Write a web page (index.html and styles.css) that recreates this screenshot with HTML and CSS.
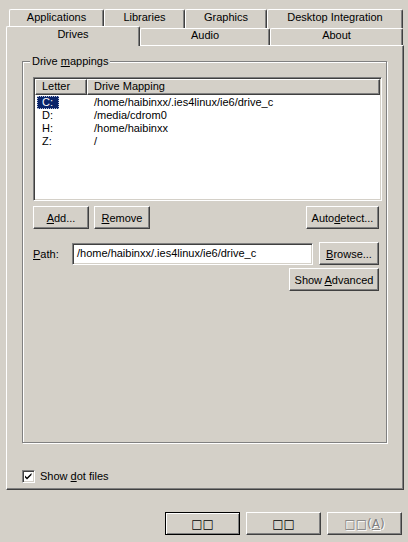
FILE: index.html
```html
<!DOCTYPE html>
<html>
<head>
<meta charset="utf-8">
<title>Wine configuration - Drives</title>
<link rel="stylesheet" href="styles.css">
</head>
<body>
<div class="dialog">
  <div class="tabrow back">
    <div class="tab w-app">Applications</div>
    <div class="tab w-lib">Libraries</div>
    <div class="tab w-gfx">Graphics</div>
    <div class="tab w-desk">Desktop Integration</div>
  </div>
  <div class="tabrow front">
    <div class="tab active w-drives">Drives</div>
    <div class="tab w-audio">Audio</div>
    <div class="tab w-about">About</div>
  </div>
  <div class="panel">
    <div class="group">
      <span class="group-title">Drive <u>m</u>appings</span>
      <div class="listview">
        <div class="lv-header">
          <div class="hdr col-letter">Letter</div>
          <div class="hdr col-map">Drive Mapping</div>
        </div>
        <div class="lv-row">
          <div class="cell col-letter"><span class="label selected">C:</span></div>
          <div class="cell col-map">/home/haibinxx/.ies4linux/ie6/drive_c</div>
        </div>
        <div class="lv-row">
          <div class="cell col-letter"><span class="label">D:</span></div>
          <div class="cell col-map">/media/cdrom0</div>
        </div>
        <div class="lv-row">
          <div class="cell col-letter"><span class="label">H:</span></div>
          <div class="cell col-map">/home/haibinxx</div>
        </div>
        <div class="lv-row">
          <div class="cell col-letter"><span class="label">Z:</span></div>
          <div class="cell col-map">/</div>
        </div>
      </div>
      <div class="row btnrow">
        <div class="btn b-add"><span><u>A</u>dd...</span></div>
        <div class="btn b-remove"><span><u>R</u>emove</span></div>
        <div class="btn b-auto"><span>Auto<u>d</u>etect...</span></div>
      </div>
      <div class="row pathrow">
        <span class="path-label"><u>P</u>ath:</span>
        <div class="input">/home/haibinxx/.ies4linux/ie6/drive_c</div>
        <div class="btn b-browse"><span><u>B</u>rowse...</span></div>
      </div>
      <div class="row advrow">
        <div class="btn b-adv"><span>Show <u>A</u>dvanced</span></div>
      </div>
    </div>
    <div class="check-row">
      <span class="checkbox"><svg width="9" height="9" viewBox="0 0 9 9"><path d="M1 3.5 L3 5.5 L7.5 1 L7.5 3 L3 7.5 L1 5.5 Z" fill="#000"/></svg></span>
      <span class="check-label">Show <u>d</u>ot files</span>
    </div>
  </div>
  <div class="footer">
    <div class="btn fbtn default"><span>□□</span></div>
    <div class="btn fbtn"><span>□□</span></div>
    <div class="btn fbtn disabled"><span>□□(<u>A</u>)</span></div>
  </div>
</div>
</body>
</html>
```
FILE: styles.css
```css
html, body {
  margin: 0;
  padding: 0;
}
body {
  width: 408px;
  height: 542px;
  background: #d4d0c8;
  font-family: "Liberation Sans", Arial, sans-serif;
  font-size: 11px;
  color: #000;
  overflow: hidden;
}
u {
  text-decoration: underline;
  text-underline-offset: 1px;
}
.dialog {
  padding: 9px 0 0 6px;
}

/* ---------- tabs ---------- */
.tabrow {
  display: flex;
}
.tabrow.back {
  margin-left: 3px;
  height: 19px;
}
.tabrow.front {
  margin-top: -2px;
  height: 19px;
  align-items: flex-start;
}
.tab {
  box-sizing: border-box;
  height: 19px;
  border-top: 1px solid #fff;
  border-left: 1px solid #fff;
  border-right: 1px solid #404040;
  border-radius: 2px 2px 0 0;
  box-shadow: inset -1px 0 #808080;
  background: #d4d0c8;
  text-align: center;
  line-height: 15px;
  white-space: nowrap;
}
.tabrow.front .tab {
  margin-top: 2px;
  height: 17px;
  line-height: 13px;
}
.tabrow.front .tab.active {
  position: relative;
  z-index: 1;
  margin-top: 0;
  height: 20px;
  line-height: 15px;
}
.w-app { width: 95px; }
.w-lib { width: 81px; }
.w-gfx { width: 82px; }
.w-desk { width: 136px; }
.w-drives { width: 134px; }
.w-audio { width: 130px; }
.w-about { width: 133px; }

/* ---------- panel ---------- */
.panel {
  box-sizing: border-box;
  width: 398px;
  height: 445px;
  border-top: 1px solid #fff;
  border-left: 1px solid #fff;
  border-right: 1px solid #404040;
  border-bottom: 1px solid #404040;
  box-shadow: inset -1px -1px #808080;
  padding: 15px 16px 6px 15px;
  display: flex;
  flex-direction: column;
}
.group {
  position: relative;
  flex: 1;
  border: 1px solid #808080;
  box-shadow: inset 1px 1px #fff, 1px 1px #fff;
  padding: 15px 4px 0 10px;
}
.group-title {
  position: absolute;
  top: -7px;
  left: 7px;
  padding: 0 2px;
  line-height: 13px;
  background: #d4d0c8;
}

/* ---------- list view ---------- */
.listview {
  box-sizing: border-box;
  width: 349px;
  height: 124px;
  background: #fff;
  border-top: 1px solid #808080;
  border-left: 1px solid #808080;
  border-right: 1px solid #fff;
  border-bottom: 1px solid #fff;
  box-shadow: inset 1px 1px #404040, inset -1px -1px #d4d0c8;
  padding: 1px;
}
.lv-header {
  display: flex;
  height: 16px;
  margin-bottom: 1px;
}
.hdr {
  box-sizing: border-box;
  height: 16px;
  background: #d4d0c8;
  border-top: 1px solid #fff;
  border-left: 1px solid #fff;
  border-right: 1px solid #404040;
  border-bottom: 1px solid #404040;
  box-shadow: inset -1px -1px #808080;
  padding-left: 6px;
  line-height: 13px;
}
.col-letter { width: 52px; flex: none; }
.col-map { flex: 1; }
.lv-row {
  display: flex;
  height: 13px;
  line-height: 13px;
}
.cell.col-letter { padding-left: 2px; box-sizing: border-box; }
.cell.col-map { padding-left: 7px; }
.label {
  display: inline-block;
  padding: 0 6px 0 5px;
  height: 13px;
}
.label.selected {
  background: #0a246a;
  color: #fff;
  outline: 1px dotted #b8c0d8;
  outline-offset: -1px;
}

/* ---------- buttons ---------- */
.row {
  display: flex;
  align-items: center;
  padding-right: 3px;
}
.btn {
  box-sizing: border-box;
  height: 23px;
  display: flex;
  align-items: center;
  justify-content: center;
  background: #d4d0c8;
  border-top: 1px solid #fff;
  border-left: 1px solid #fff;
  border-right: 1px solid #404040;
  border-bottom: 1px solid #404040;
  box-shadow: inset -1px -1px #808080;
  white-space: nowrap;
}
.btnrow {
  margin-top: 5px;
  gap: 5px;
}
.b-add { width: 56px; }
.b-remove { width: 56px; }
.b-auto { width: 73px; margin-left: auto; }

.pathrow {
  margin-top: 13px;
}
.path-label {
  width: 39px;
  flex: none;
}
.input {
  box-sizing: border-box;
  width: 241px;
  height: 22px;
  background: #fff;
  border-top: 1px solid #808080;
  border-left: 1px solid #808080;
  border-right: 1px solid #fff;
  border-bottom: 1px solid #fff;
  box-shadow: inset 1px 1px #404040, inset -1px -1px #d4d0c8;
  padding-left: 4px;
  line-height: 19px;
  white-space: nowrap;
  overflow: hidden;
}
.b-browse { width: 60px; margin-left: auto; }
.advrow {
  margin-top: 3px;
  justify-content: flex-end;
}
.b-adv { width: 90px; }

/* ---------- checkbox ---------- */
.check-row {
  margin-top: 27px;
  height: 13px;
  display: flex;
  align-items: center;
}
.checkbox {
  box-sizing: border-box;
  width: 13px;
  height: 13px;
  background: #fff;
  border-top: 1px solid #808080;
  border-left: 1px solid #808080;
  border-right: 1px solid #fff;
  border-bottom: 1px solid #fff;
  box-shadow: inset 1px 1px #404040, inset -1px -1px #d4d0c8;
  padding: 1px;
  display: flex;
}
.check-label {
  margin-left: 5px;
  line-height: 13px;
}

/* ---------- footer ---------- */
.footer {
  margin-top: 22px;
  padding-right: 6px;
  display: flex;
  justify-content: flex-end;
  gap: 6px;
}
.fbtn {
  width: 75px;
  font-family: "DejaVu Sans", sans-serif;
  font-size: 12px;
}
.fbtn span {
  line-height: 14px;
}
.fbtn.default {
  border: 1px solid #000;
  box-shadow: inset 1px 1px #fff, inset -1px -1px #808080;
}
.fbtn.disabled {
  color: #808080;
  text-shadow: 1px 1px #fff;
}
```
